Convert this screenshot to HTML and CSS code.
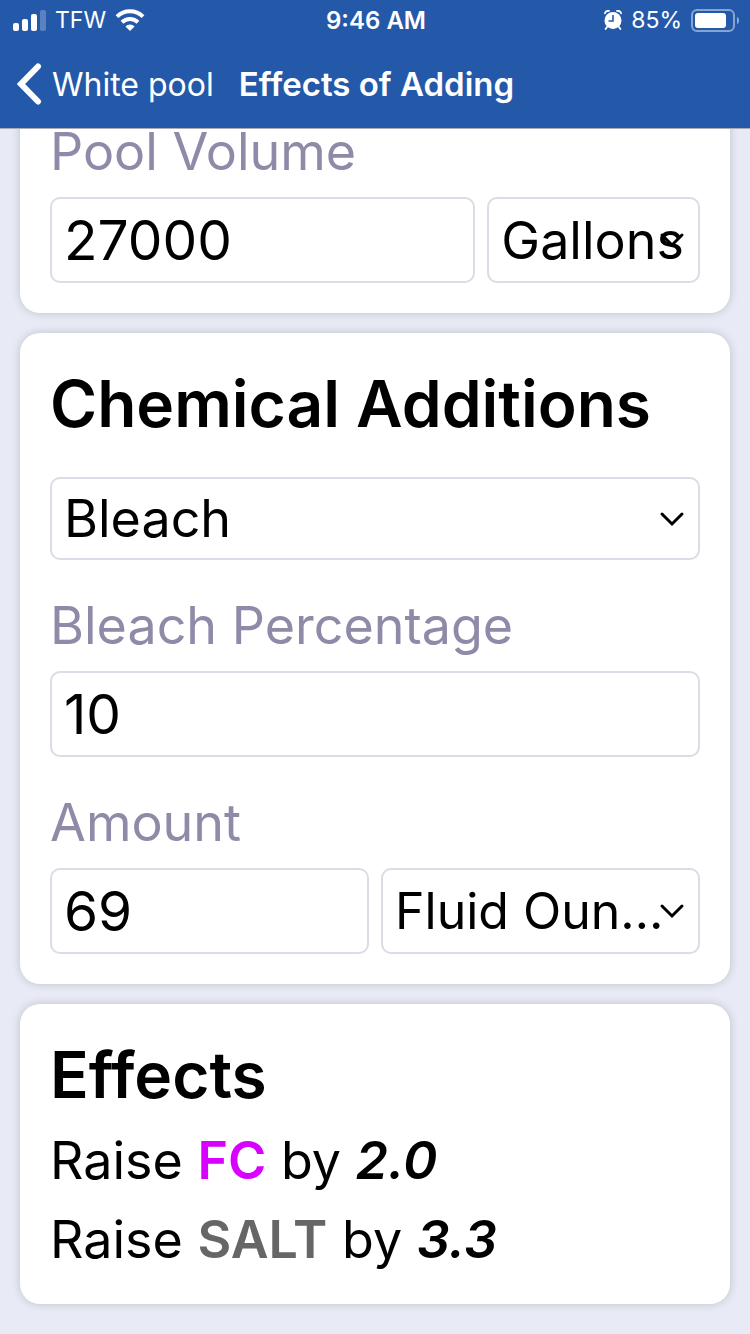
FILE: index.html
```html
<!DOCTYPE html>
<html lang="en">
<head>
    <meta charset="UTF-8">
    <meta name="viewport" content="width=device-width, initial-scale=1.0">
    <title>Effects of Adding</title>
    <link rel="stylesheet" href="styles.css">
</head>
<body>
    <header class="header">
        <div class="status-bar">
            <div class="status-left">
                <svg width="33" height="21" viewBox="0 0 33 21" fill="#fff" aria-hidden="true">
                    <rect x="0" y="13" width="6" height="8" rx="2"/>
                    <rect x="9" y="9" width="6" height="12" rx="2"/>
                    <rect x="18" y="4" width="6" height="17" rx="2"/>
                    <rect x="27" y="0" width="6" height="21" rx="2" opacity=".25"/>
                </svg>
                <span>TFW</span>
                <svg width="30" height="22" viewBox="0 0 30 22" fill="none" stroke="#fff" stroke-width="4" aria-hidden="true">
                    <path d="M2 7.6a18.6 18.6 0 0 1 26 0"/>
                    <path d="M7 13.2a11.5 11.5 0 0 1 16 0"/>
                    <path d="M15 22l-4.6-4.6a6.6 6.6 0 0 1 9.2 0z" fill="#fff" stroke="none"/>
                </svg>
            </div>
            <span class="time">9:46 AM</span>
            <div class="status-right">
                <svg width="18" height="20" viewBox="0 0 18 20" aria-hidden="true">
                    <circle cx="9" cy="10.500" r="8.500" fill="#fff"/>
                    <path d="M.9 3.300A3.600 3.600 0 0 1 5 .9M17.100 3.300A3.600 3.600 0 0 0 13 .9M3 17l-1.400 2M15 17l1.400 2" fill="none" stroke="#fff" stroke-width="1.800" stroke-linecap="round"/>
                    <path d="M9 5v6H4.500" fill="none" stroke="#2459aa" stroke-width="1.600"/>
                </svg>
                <span>85%</span>
                <svg width="48" height="23" viewBox="0 0 48 23" aria-hidden="true">
                    <rect x="1" y="1" width="42" height="21" rx="5" fill="none" stroke="#fff" stroke-opacity=".45" stroke-width="2"/>
                    <rect x="4" y="4" width="31" height="15" rx="3" fill="#fff"/>
                    <path d="M46 8v7c1.600-.6 2-2 2-3.500s-.4-2.900-2-3.500z" fill="#fff" fill-opacity=".5"/>
                </svg>
            </div>
        </div>
        <nav class="nav-bar">
            <a class="back" href="#">
                <svg width="25" height="42" viewBox="0 0 25 42" fill="none" stroke="#fff" stroke-width="6" stroke-linecap="round" stroke-linejoin="miter" aria-hidden="true">
                    <path d="M21 3.500L4 21l17 17.500"/>
                </svg>
                White pool
            </a>
            <h1>Effects of Adding</h1>
        </nav>
    </header>

    <main class="content">
        <section class="card card-scrolled">
            <div class="field">
                <label for="volume">Pool Volume</label>
                <div class="row row-wide">
                    <input type="text" id="volume" inputmode="numeric" value="27000">
                    <select class="select-tight" aria-label="Volume unit">
                        <option>Gallons</option>
                        <option>Liters</option>
                    </select>
                </div>
            </div>
        </section>

        <section class="card">
            <h2>Chemical Additions</h2>
            <div class="form">
                <select class="select-chemical" aria-label="Chemical">
                    <option>Bleach</option>
                    <option>Salt</option>
                </select>
                <div class="field">
                    <label for="percentage">Bleach Percentage</label>
                    <input type="text" id="percentage" inputmode="decimal" value="10">
                </div>
                <div class="field">
                    <label for="amount">Amount</label>
                    <div class="row">
                        <input type="text" id="amount" inputmode="decimal" value="69">
                        <select class="select-amount" aria-label="Amount unit">
                            <option>Fluid Ounces</option>
                            <option>Cups</option>
                        </select>
                    </div>
                </div>
            </div>
        </section>

        <section class="card">
            <h2>Effects</h2>
            <div class="effects">
                <p>Raise <b class="fc">FC</b> by <em>2.0</em></p>
                <p>Raise <b class="salt">SALT</b> by <em>3.3</em></p>
            </div>
        </section>
    </main>
</body>
</html>
```
FILE: styles.css
```css
* {
    box-sizing: border-box;
}
body {
    margin: 0;
    background-color: #e8ebf5;
    color: #000;
    font-family: Inter, Roboto, sans-serif;
    font-size: 52px;
}
.header {
    position: sticky;
    top: 0;
    z-index: 1;
    height: 129px;
    background-color: #2459aa;
    border-bottom: 1px solid #a9aab2;
    color: #fff;
}
.status-bar {
    display: grid;
    grid-template-columns: 1fr auto 1fr;
    align-items: center;
    height: 40px;
    padding: 0 11px 0 13px;
    font-size: 23px;
}
.status-left,
.status-right {
    display: flex;
    align-items: center;
    gap: 9px;
}
.status-right {
    justify-content: flex-end;
}
.time {
    font-size: 24px;
    font-weight: 600;
}
.nav-bar {
    display: flex;
    align-items: center;
    gap: 25px;
    height: 88px;
    padding: 0 17px;
    font-size: 32px;
}
.back {
    display: flex;
    align-items: center;
    gap: 10px;
    color: #fff;
    text-decoration: none;
}
h1 {
    margin: 0;
    font-size: 33px;
    font-weight: 600;
}
.content {
    display: flex;
    flex-direction: column;
    gap: 20px;
    padding: 0 20px 30px;
}
.card {
    padding: 30px;
    background-color: #fff;
    border-radius: 20px;
    box-shadow: 0 0 10px rgba(0, 0, 0, 0.18);
}
/* first card sits partly under the header */
.card-scrolled {
    margin-top: -41px;
}
h2 {
    margin: 0;
    font-size: 64px;
    font-weight: 600;
    line-height: 82px;
}
.form {
    display: flex;
    flex-direction: column;
    gap: 32px;
    margin-top: 32px;
}
.field {
    display: flex;
    flex-direction: column;
    gap: 11px;
}
label {
    color: #8e8aa8;
    line-height: 68px;
}
.row {
    display: grid;
    grid-template-columns: 1fr 1fr;
    gap: 12px;
}
.row-wide {
    grid-template-columns: 2fr 1fr;
}
input,
select {
    width: 100%;
    min-width: 0;
    height: 86px;
    margin: 0;
    padding: 0 12px;
    border: 2px solid #dcdbe6;
    border-radius: 10px;
    background-color: #fff;
    color: #000;
    font: inherit;
}
input {
    font-size: 55px;
}
select {
    appearance: none;
    padding-right: 38px;
    background-image: url("data:image/svg+xml,%3Csvg xmlns='http://www.w3.org/2000/svg' width='26' height='16' fill='none' stroke='%23000' stroke-width='3' stroke-linecap='round'%3E%3Cpath d='M3 3l10 10 10-10'/%3E%3C/svg%3E");
    background-repeat: no-repeat;
    background-position: right 13px center;
    text-overflow: ellipsis;
}
.select-chemical {
    height: 83px;
}
.select-tight {
    padding-right: 0;
}
.select-amount {
    padding-right: 30px;
    font-size: 50px;
}
.effects {
    display: flex;
    flex-direction: column;
    gap: 11px;
    margin-top: 11px;
}
p {
    margin: 0;
    line-height: 68px;
}
b,
em {
    font-weight: 600;
}
.fc {
    color: #d800ff;
}
.salt {
    color: #666;
}
```
